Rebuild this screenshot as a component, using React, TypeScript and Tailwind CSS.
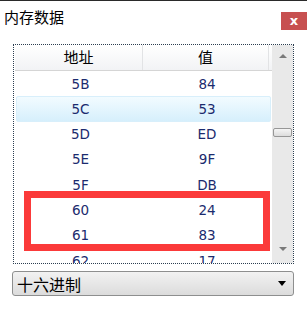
import React from "react";

const rows = [
  ["5B", "84"],
  ["5C", "53"],
  ["5D", "ED"],
  ["5E", "9F"],
  ["5F", "DB"],
  ["60", "24"],
  ["61", "83"],
  ["62", "17"],
];

const cjk = { fontFamily: '"Noto Sans CJK SC", "Microsoft YaHei", sans-serif' };
const latin = { fontFamily: '"DejaVu Sans", Verdana, sans-serif' };

export default function App() {
  return (
    <div className="relative w-[307px] h-[310px] bg-white overflow-hidden">
      <div className="h-px bg-[#2a2a2a]" />

      {/* title bar */}
      <div className="flex items-start justify-between h-[43px]">
        <span className="pl-[4px] pt-[6px] text-[15px] leading-[20px] text-black" style={cjk}>
          内存数据
        </span>
        <div className="mt-[11px] w-[26px] h-[18px] bg-[#c75050] flex items-center justify-center">
          <span className="text-white text-[13px] font-bold leading-none pb-px" style={latin}>
            x
          </span>
        </div>
      </div>

      {/* list box */}
      <div className="ml-[13px] w-[281px] h-[220px] border border-dotted border-[#2c3e50] flex">
        <div className="flex-1 flex flex-col overflow-hidden pl-px">
          <div className="flex h-[26px] shrink-0 bg-gradient-to-b from-white to-[#f2f3f5] border-b border-[#d5d5d5]">
            <div className="w-[128px] flex items-center justify-center border-r border-[#e2e3e5] text-[15px] text-black" style={cjk}>
              地址
            </div>
            <div className="w-[126px] flex items-center justify-center border-r border-[#e2e3e5] text-[15px] text-black" style={cjk}>
              值
            </div>
            <div className="flex-1" />
          </div>
          {rows.map(([a, v], i) => (
            <div
              key={a}
              className={
                i === 1
                  ? "flex h-[25.3px] shrink-0 w-[255px] ml-px rounded-[2px] border border-[#d8effb] bg-gradient-to-b from-[#f2fbff] to-[#d6effc]"
                  : "flex h-[25.3px] shrink-0 w-[255px] ml-px border border-transparent"
              }
            >
              <div className="w-[127px] flex items-center justify-center text-[13.5px] text-[#1b2b6e]" style={latin}>
                {a}
              </div>
              <div className="w-[126px] flex items-center justify-center text-[13.5px] text-[#1b2b6e]" style={latin}>
                {v}
              </div>
            </div>
          ))}
        </div>

        {/* scrollbar */}
        <div className="w-[21px] bg-[#e9e9e9] flex flex-col items-center relative">
          <div className="mt-[9px] w-0 h-0 border-l-[4px] border-r-[4px] border-b-[4px] border-l-transparent border-r-transparent border-b-[#7a7a7a]" />
          <div className="mt-[70px] w-[19px] h-[9px] rounded-[2px] border border-[#979797] bg-gradient-to-b from-[#f5f5f5] to-[#dcdcdc]" />
          <div className="mt-auto mb-[12px] w-0 h-0 border-l-[4px] border-r-[4px] border-t-[4px] border-l-transparent border-r-transparent border-t-[#7a7a7a]" />
        </div>
      </div>

      {/* combo box */}
      <div className="mt-[7px] ml-[12px] w-[282px] h-[25px] rounded-[3px] border border-[#8e8f8f] bg-gradient-to-b from-[#f2f2f2] to-[#dcdcdc] flex items-center justify-between px-[4px]">
        <span className="text-[16px] leading-none text-black" style={cjk}>
          十六进制
        </span>
        <div className="mr-[3px] w-0 h-0 border-l-[4px] border-r-[4px] border-t-[5px] border-l-transparent border-r-transparent border-t-black" />
      </div>

      {/* annotation */}
      <div className="absolute left-[24px] top-[191px] w-[246px] h-[60px] border-[7px] border-[#fb3a3a]" />
    </div>
  );
}
